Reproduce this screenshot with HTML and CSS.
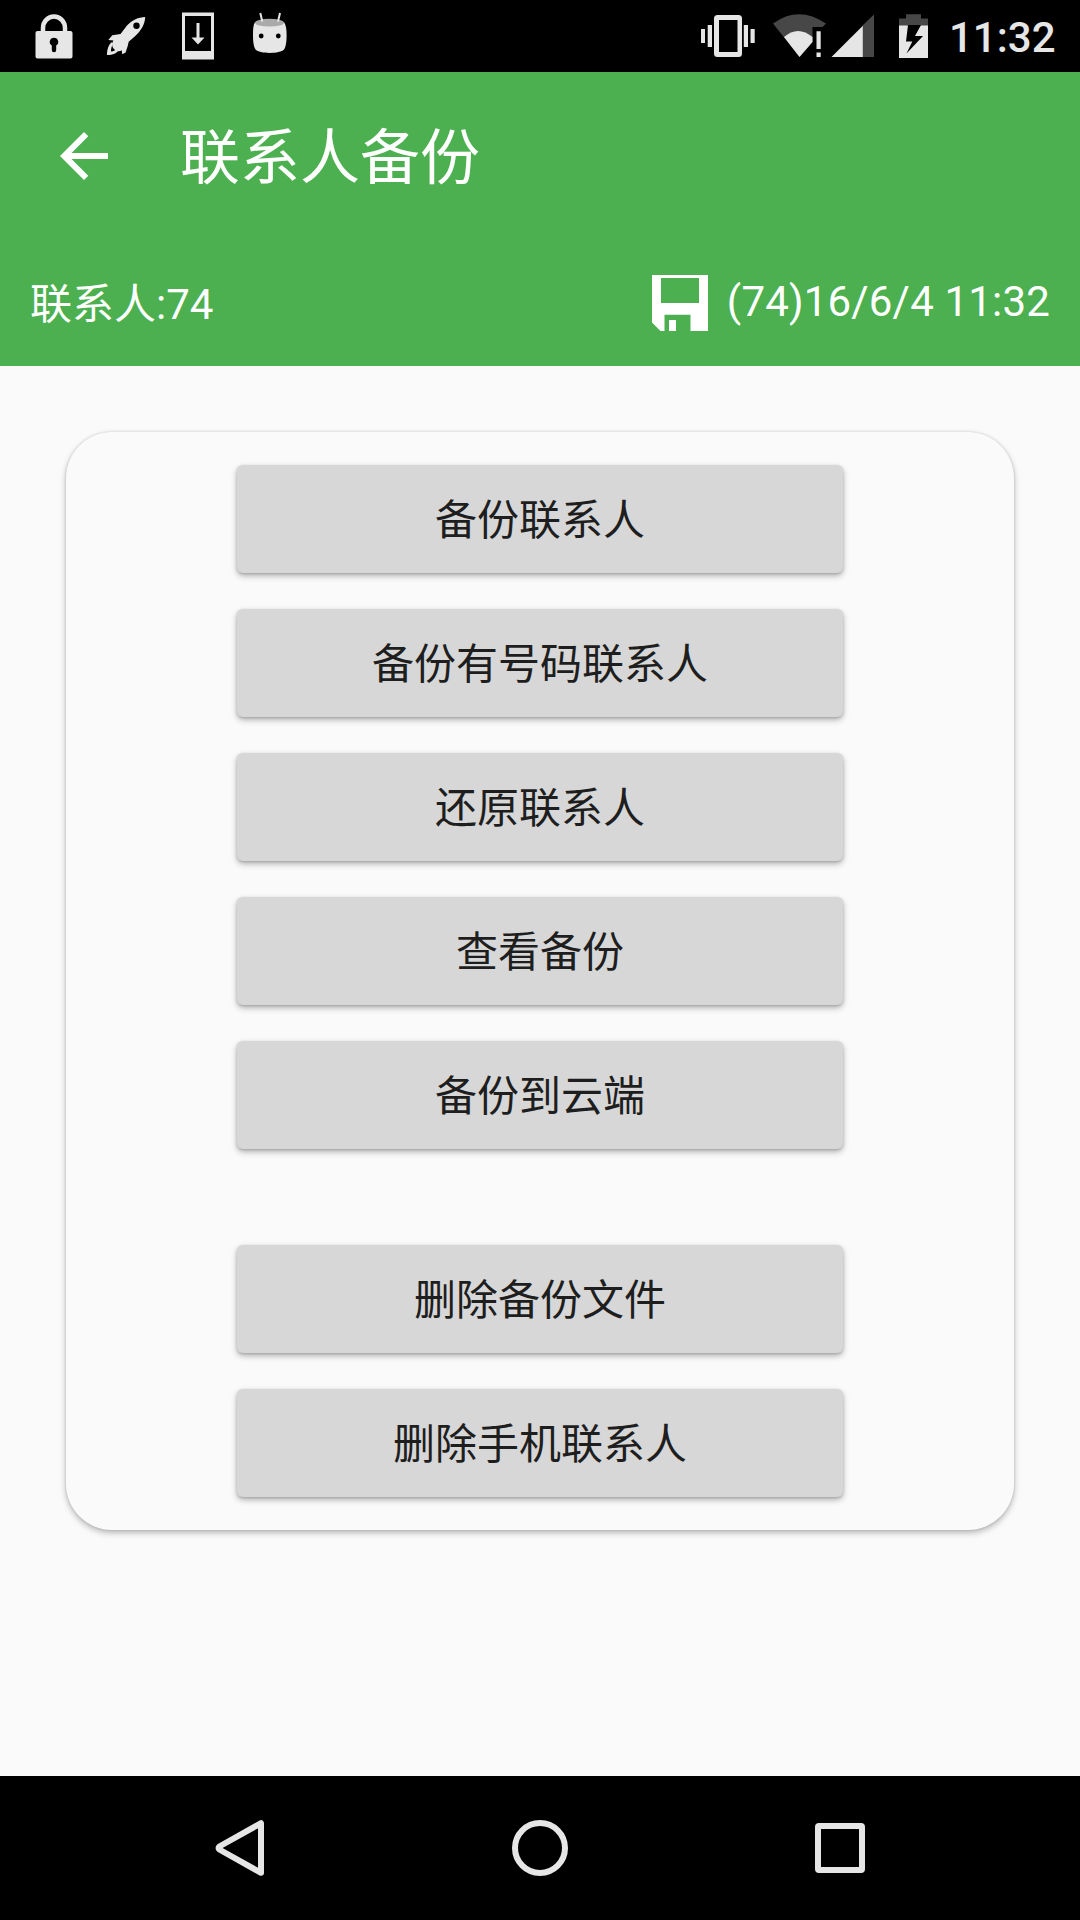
FILE: index.html
```html
<!DOCTYPE html>
<html lang="zh-CN">
<head>
<meta charset="utf-8">
<title>联系人备份</title>
<link rel="stylesheet" href="styles.css">
</head>
<body>
<div class="screen">
  <div class="status-bar">
    <div class="notifications">
      <svg class="status-icon" viewBox="0 0 72 72">
        <path d="M25 33V28a11 11.5 0 0 1 22 0v5" fill="none" stroke="#e6e6e6" stroke-width="4.5"/>
        <path fill-rule="evenodd" d="M19.500 31h33a2 2 0 0 1 2 2v23.500a2 2 0 0 1-2 2h-33a2 2 0 0 1-2-2V33a2 2 0 0 1 2-2zM36 37.700a4.200 4.200 0 0 0-2.200 7.800v4.500a2.200 2.200 0 0 0 4.400 0v-4.500a4.200 4.200 0 0 0-2.200-7.800z"/>
      </svg>
      <svg class="status-icon" viewBox="0 0 72 72">
        <path fill-rule="evenodd" d="M55.200 16.900c-7 .3-13 3-18 8.300l-6.700 8.800-8.200 1.300-4 4.800 5.200.5c-2.400 3.400-1.700 8.200 3.100 10.300 1.800.7 3.700.5 5.100-.6l.5 4 3.400-1.900 2.100-6.400 1-4.200 6.300-5.600c6.500-6 10-12.500 10.200-19.300zM46.500 22.500a3.200 3.200 0 1 1 0 6.400 3.200 3.200 0 0 1 0-6.400z"/>
        <path d="M21.400 42.200l1.600 1c-1.500 3.500-2.100 5.700-2 8.300 2.800-.4 4.700-1.300 6.100-2.800l1.200 1.200c-1.300 3.300-5 4.900-11.400 5 .1-6 1.800-10.300 4.500-12.700z"/>
      </svg>
      <svg class="status-icon" viewBox="0 0 72 72">
        <path fill-rule="evenodd" d="M20 12.500h32v47H20zM23 16v35h26V16z"/>
        <path d="M34.500 23h3v14.500h5L36 44.500l-6.500-7h5z"/>
      </svg>
      <svg class="status-icon" viewBox="0 0 72 72">
        <path d="M21 22c7 4 22 4 29 0 2 3 2.600 7 2.600 13 0 8-1 12-2.500 14.500C46 54 25.500 54 21.500 49.500 20 47 19 43 19 35c0-6 .2-10 2-13z"/>
        <ellipse cx="35.500" cy="22.700" rx="14.500" ry="3.900" fill="#aaa"/>
        <path d="M26.300 13l2 8.500M46 13l-2 8.500" fill="none" stroke="#e6e6e6" stroke-width="2"/>
        <circle cx="27.200" cy="36" r="2.400" fill="#000"/><circle cx="44.300" cy="36" r="2.400" fill="#000"/>
      </svg>
    </div>
    <div class="system">
      <svg class="vibrate" viewBox="700 0 58 72">
        <path fill-rule="evenodd" d="M717.500 15h21q3.500 0 3.500 3.500V53.500q0 3.500-3.500 3.500h-21q-3.500 0-3.500-3.500V18.500q0-3.500 3.500-3.500zM719 20v32h18.500V20z"/>
        <path d="M701 29h4v14h-4zM707.700 25h4.300v22h-4.300zM743.800 25h4.200v22h-4.200zM750.500 29h4.200v14h-4.200z"/>
      </svg>
      <svg class="wifi" viewBox="770 0 58 72">
        <path d="M773 23.500q25.500-18.500 53 0L822.500 27H812.500V42L799.500 57z" fill="#474747"/>
        <path d="M784 37q14-12 28.500 0v5L799.500 57z"/>
        <path d="M816.500 31.300h4.200V49h-4.200zM816.500 52.500h4.200V57h-4.200z"/>
      </svg>
      <svg class="signal" viewBox="830 0 46 72">
        <path d="M862.500 25.500L874 14.500V57h-11.500z" fill="#474747"/>
        <path d="M831.500 57l31.300-31.300V57z"/>
      </svg>
      <svg class="battery" viewBox="898 0 32 72">
        <path d="M899 26v-7.600h7V14.300h15v4.100h7V26z" fill="#474747"/>
        <path d="M899 25.500h29v32.500h-29z"/>
        <path d="M908 25h13l-6 11h8L906.500 53.500l5.800-12H906z" fill="#000"/>
      </svg>
      <span class="clock">11:32</span>
    </div>
  </div>

  <header class="header">
    <div class="toolbar">
      <svg class="back" viewBox="0 0 48 48"><path d="M48 21v6H11.500l16.800 16.800L24 48 0 24 24 0l4.300 4.200L11.500 21z"/></svg>
      <h1 class="title">联系人备份</h1>
    </div>
    <div class="summary">
      <span class="count">联系人:74</span>
      <div class="saved">
        <svg class="disk" viewBox="0 0 56 56"><path fill-rule="evenodd" d="M0 0h56v56H38.500V39.700h-26V56H8.500L0 47.500zM9 3v25h38V3zM17 45h7v11h-7z"/></svg>
        <span class="stamp">(74)16/6/4 11:32</span>
      </div>
    </div>
  </header>

  <main class="content">
    <section class="card">
      <button class="action">备份联系人</button>
      <button class="action">备份有号码联系人</button>
      <button class="action">还原联系人</button>
      <button class="action">查看备份</button>
      <button class="action">备份到云端</button>
      <button class="action separated">删除备份文件</button>
      <button class="action">删除手机联系人</button>
    </section>
  </main>

  <nav class="nav-bar">
    <svg class="nav-icon" viewBox="0 0 60 60"><path d="M51 5.200v49.600L9.300 31.500q-1.500-1.500 0-3z"/></svg>
    <svg class="nav-icon" viewBox="0 0 60 60"><circle cx="30" cy="30" r="25"/></svg>
    <svg class="nav-icon" viewBox="0 0 60 60"><rect x="8" y="8" width="44" height="44" rx="1"/></svg>
  </nav>
</div>
</body>
</html>
```
FILE: styles.css
```css
* { box-sizing: border-box; }

body {
  margin: 0;
  background: #fafafa;
  font-family: Roboto, "Noto Sans CJK SC", sans-serif;
}

.screen {
  display: flex;
  flex-direction: column;
  width: 1080px;
  height: 1920px;
}

.status-bar {
  display: flex;
  justify-content: space-between;
  height: 72px;
  padding: 0 24px 0 18px;
  background: #000;
  color: #e6e6e6;
  fill: #e6e6e6;
}

.notifications, .system { display: flex; }
.status-icon { width: 72px; height: 72px; }
.vibrate { width: 58px; height: 72px; margin-right: 12px; }
.wifi { width: 58px; height: 72px; margin-right: 2px; }
.signal { width: 46px; height: 72px; margin-right: 22px; }
.battery { width: 32px; height: 72px; margin-right: 19px; }

.clock {
  width: 107px;
  font-size: 42px;
  font-weight: 500;
  line-height: 76px;
  white-space: nowrap;
}

.header {
  height: 294px;
  background: #4caf50;
  color: #fff;
  fill: #fff;
}

.toolbar {
  display: flex;
  align-items: center;
  height: 168px;
  padding-left: 60px;
}

.back { width: 48px; height: 48px; margin-right: 72px; }

.title {
  margin: 0;
  padding-top: 6px;
  font-size: 60px;
  font-weight: 400;
  line-height: 84px;
}

.summary {
  display: flex;
  align-items: center;
  justify-content: space-between;
  height: 126px;
  padding: 0 30px;
  font-size: 42px;
  line-height: 60px;
}

.count { padding-top: 4px; }
.saved { display: flex; align-items: center; }
.disk { width: 56px; height: 56px; margin-right: 19px; }
.stamp { padding-bottom: 2px; letter-spacing: .18px; }

.content {
  flex: 1;
  padding: 66px;
}

.card {
  display: flex;
  flex-direction: column;
  align-items: center;
  gap: 36px;
  height: 1098px;
  padding-top: 33px;
  border-radius: 46px;
  background: #fafafa;
  box-shadow: 0 3px 6px rgba(0, 0, 0, .26), 0 0 3px rgba(0, 0, 0, .14);
}

.action {
  width: 606px;
  height: 108px;
  padding: 4px 0 0;
  border: 0;
  border-radius: 6px;
  background: #d7d7d7;
  box-shadow: 0 3px 6px rgba(0, 0, 0, .28), 0 1px 3px rgba(0, 0, 0, .16);
  color: #1e1e1e;
  font-family: inherit;
  font-size: 42px;
  line-height: 60px;
}

.separated { margin-top: 60px; }

.nav-bar {
  display: flex;
  justify-content: center;
  align-items: center;
  gap: 240px;
  height: 144px;
  background: #000;
}

.nav-icon {
  width: 60px;
  height: 60px;
  fill: none;
  stroke: #e6e6e6;
  stroke-width: 6;
  stroke-linejoin: round;
}
```
